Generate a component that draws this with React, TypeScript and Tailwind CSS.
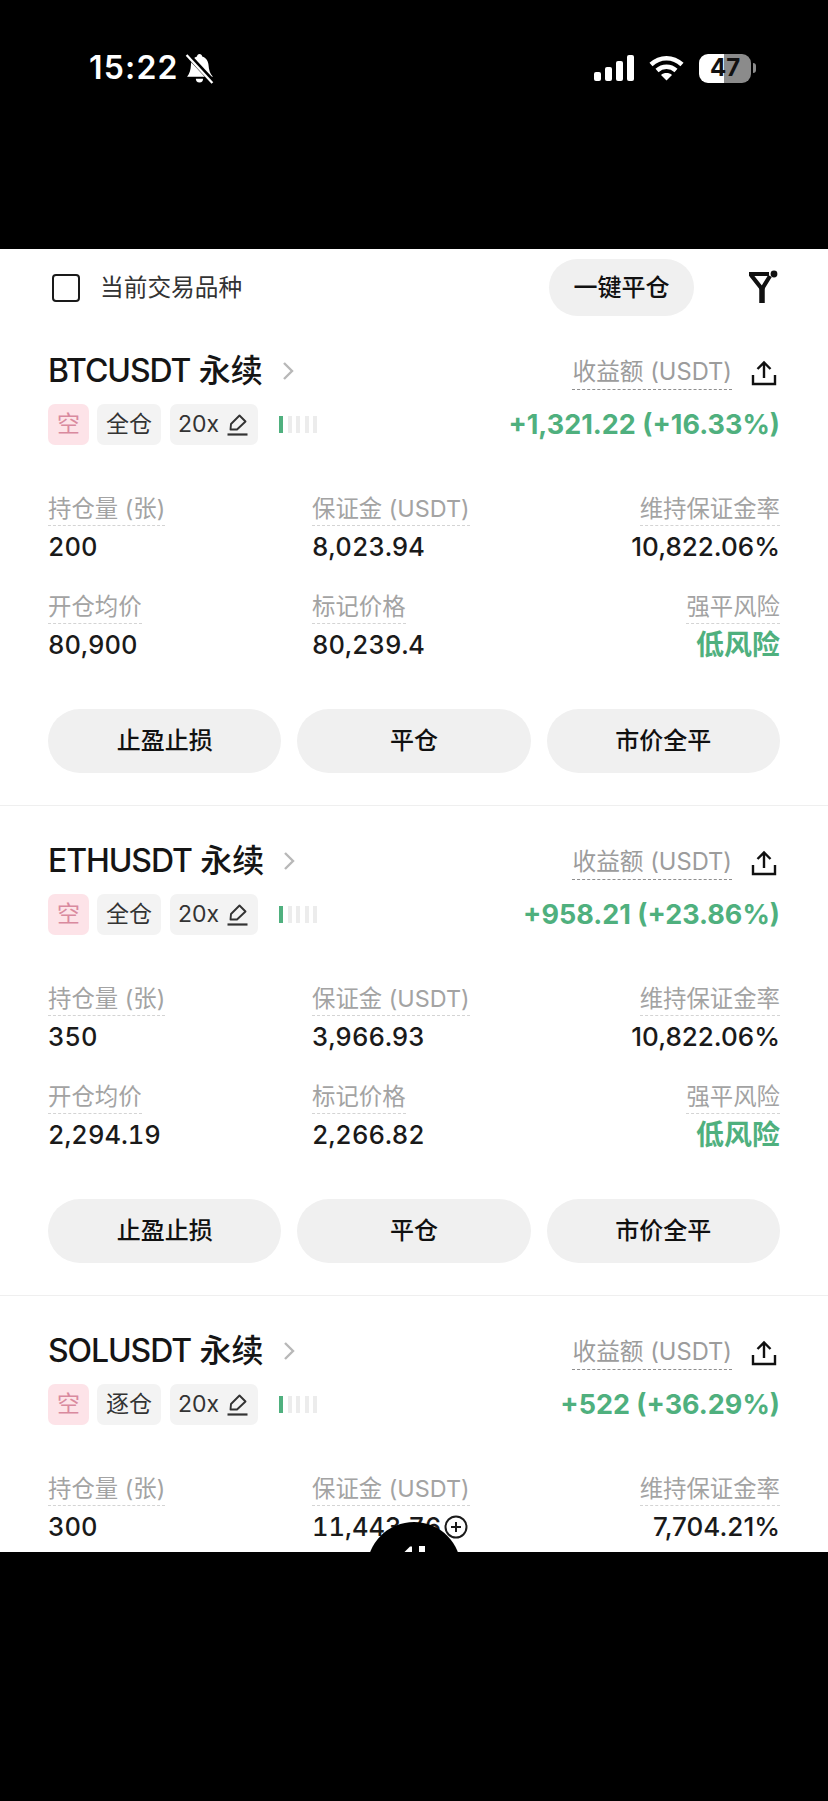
import React from "react";

const FONT = 'Inter, "Noto Sans CJK SC", sans-serif';

type Position = {
  symbol: string;
  margin: string;
  pnl: string;
  size: string;
  marginValue: string;
  marginRate: string;
  entry: string;
  mark: string;
  addMargin?: boolean;
};

const positions: Position[] = [
  { symbol: "BTCUSDT", margin: "全仓", pnl: "+1,321.22 (+16.33%)", size: "200", marginValue: "8,023.94", marginRate: "10,822.06%", entry: "80,900", mark: "80,239.4" },
  { symbol: "ETHUSDT", margin: "全仓", pnl: "+958.21 (+23.86%)", size: "350", marginValue: "3,966.93", marginRate: "10,822.06%", entry: "2,294.19", mark: "2,266.82" },
  { symbol: "SOLUSDT", margin: "逐仓", pnl: "+522 (+36.29%)", size: "300", marginValue: "11,443.76", marginRate: "7,704.21%", entry: "146.2", mark: "141.3", addMargin: true },
];

function StatusBar() {
  return (
    <div className="h-[249px] shrink-0 bg-black pt-[52px] pl-[89px] pr-[72px]">
      <div className="flex h-[32px] items-center text-white">
        <span className="text-[32px] font-semibold leading-none tracking-[1.2px]">15:22</span>
        <svg className="ml-[6px]" width="30" height="31" viewBox="0 0 29 30" fill="white">
          <path d="M14 1c1.500 0 2.500 1 2.600 2.400C20.500 4.500 22.500 8 22.800 12c.3 4 1.200 7.500 4.200 11H2c2.500-3.500 3.500-7 3.700-11C6 8 8 4.500 11.600 3.400 11.700 2 12.600 1 14 1z" />
          <path d="M10.500 25h7a3.500 3.500 0 0 1-7 0z" />
          <path d="M2 1l26 28" stroke="black" strokeWidth="5" />
          <path d="M1.500 2l25 27" stroke="white" strokeWidth="2.200" />
        </svg>
        <div className="ml-auto flex items-center">
          <svg width="40" height="26" viewBox="0 0 40 26" fill="white">
            <rect x="0" y="17" width="7" height="9" rx="2" />
            <rect x="11" y="12" width="7" height="14" rx="2" />
            <rect x="22" y="6" width="7" height="20" rx="2" />
            <rect x="33" y="0" width="7" height="26" rx="2" />
          </svg>
          <svg className="ml-[15px]" width="35" height="26" viewBox="0 0 35 26" fill="none" stroke="white" strokeWidth="4.500">
            <path d="M2 9.500C11 1 24 1 33 9.500" />
            <path d="M8 15.500c5.500-5 13.500-5 19 0" />
            <path d="M17.500 25.500l-5.500-5.500c3-2.600 8-2.600 11 0z" fill="white" stroke="none" />
          </svg>
          <div className="ml-[15px] flex h-[29px] w-[52px] items-center justify-center rounded-[9px] bg-[linear-gradient(90deg,#ffffff_48%,#8b8b8b_48%)] text-[24px] font-bold leading-none text-[#111111]">
            47
          </div>
          <div className="ml-[2px] h-[10px] w-[3px] rounded-r-full bg-[#8b8b8b]" />
        </div>
      </div>
    </div>
  );
}

function Toolbar() {
  return (
    <div className="flex h-[67px] shrink-0 items-end pl-[52px] pr-[50px]">
      <div className="flex h-[57px] items-center">
        <div className="h-[28px] w-[28px] rounded-[4px] border-2 border-[#1a1a1a]" />
        <span className="ml-[20px] text-[23.700px] leading-none text-[#333333]">当前交易品种</span>
      </div>
      <button className="ml-auto flex h-[57px] w-[145px] items-center justify-center rounded-full bg-[#f0f0f0] text-[24px] font-medium text-[#111111]">
        一键平仓
      </button>
      <svg className="mb-[12px] ml-[54px]" width="30" height="34" viewBox="0 0 30 34" fill="none" stroke="#111111">
        <path d="M1 4h20M3 5l11 14M22 6l-8 13" strokeWidth="4.200" />
        <path d="M14 18v15" strokeWidth="5.500" />
        <circle cx="26" cy="4" r="3.400" fill="#111111" stroke="none" />
      </svg>
    </div>
  );
}

function Pencil() {
  return (
    <svg className="ml-[8px]" width="21" height="22" viewBox="0 0 21 22" fill="none" stroke="#333333" strokeWidth="1.900">
      <path d="M3.500 15.500l0.500-5.500L12.500 1.500 18.500 7.500 10 15.500z" strokeLinejoin="round" />
      <path d="M0.500 20.500h20" strokeWidth="2.200" />
    </svg>
  );
}

function RiskTicks() {
  return (
    <div className="ml-[21px] flex gap-[4.500px]">
      <div className="h-[17px] w-[4px] bg-[#4fb07e]" />
      {[0, 1, 2, 3].map((i) => (
        <div key={i} className="h-[17px] w-[4px] bg-[#ececec]" />
      ))}
    </div>
  );
}

function Metric({ label, value, align, tone, extra }: { label: string; value: string; align?: "right"; tone?: "green"; extra?: boolean }) {
  const valueClass =
    tone === "green"
      ? "text-[28px] font-semibold leading-[32px] text-[#4fb07e]"
      : align === "right"
        ? "text-[26px] font-medium leading-[32px] text-[#1a1a1a]"
        : "text-[25.500px] font-medium leading-[32px] tabular-nums text-[#1a1a1a]";
  return (
    <div className={align === "right" ? "flex flex-col items-end" : "flex flex-col items-start"}>
      <span className="h-[32px] border-b border-dashed border-[#d4d4d4] text-[23.400px] leading-[30px] text-[#a3a3a3]">
        {label}
      </span>
      <div className="flex h-[38px] items-end pb-[1px]">
        <span className={valueClass}>{value}</span>
        {extra && (
          <svg className="mb-[4px] ml-[3px]" width="24" height="24" viewBox="0 0 24 24" fill="none" stroke="#1a1a1a" strokeWidth="2">
            <circle cx="12" cy="12" r="10.500" />
            <path d="M12 7v10M7 12h10" />
          </svg>
        )}
      </div>
    </div>
  );
}

function Card({ p }: { p: Position }) {
  return (
    <section className="h-[490px] shrink-0 border-b border-[#efefef] px-[48px] pt-[34px]">
      <div className="flex h-[42px] items-center justify-between">
        <div className="flex items-center">
          <h2 className="text-[32px] font-medium leading-none text-[#151515]">
            <span className="tracking-[-1.100px]">{p.symbol}</span> 永续
          </h2>
          <svg className="ml-[19px]" width="12" height="20" viewBox="0 0 12 20" fill="none" stroke="#b8b8b8" strokeWidth="2.400">
            <path d="M2 2l8 8-8 8" />
          </svg>
        </div>
        <div className="mt-[4px] flex items-center">
          <span className="h-[34px] border-b border-dashed border-[#8f8f8f] text-[23.700px] leading-[31px] text-[#9c9c9c]">收益额 (USDT)</span>
          <svg className="ml-[19px] mr-[3px]" width="26" height="26" viewBox="0 0 26 26" fill="none" stroke="#111111" strokeWidth="2.400">
            <path d="M13 18V3M6.500 9L13 2.500 19.500 9" />
            <path d="M2 15v9h22v-9" />
          </svg>
        </div>
      </div>
      <div className="mt-[12px] flex h-[41px] items-center">
        <span className="flex h-[41px] w-[41px] items-center justify-center rounded-[7px] bg-[#fde3e8] text-[23px] text-[#d98a9e]">空</span>
        <span className="ml-[8px] flex h-[41px] w-[64px] items-center justify-center rounded-[7px] bg-[#f3f3f3] text-[23px] text-[#333333]">{p.margin}</span>
        <span className="ml-[9px] flex h-[41px] w-[88px] items-center rounded-[7px] bg-[#f3f3f3] pl-[8px] text-[23px] text-[#333333]">
          20x
          <Pencil />
        </span>
        <RiskTicks />
        <span className="ml-auto text-[27px] font-bold leading-none text-[#4fb07e]">{p.pnl}</span>
      </div>
      <div className="mt-[49px] grid grid-cols-[264px_1fr_auto] gap-y-[28px]">
        <Metric label="持仓量 (张)" value={p.size} />
        <Metric label="保证金 (USDT)" value={p.marginValue} extra={p.addMargin} />
        <Metric label="维持保证金率" value={p.marginRate} align="right" />
        <Metric label="开仓均价" value={p.entry} />
        <Metric label="标记价格" value={p.mark} />
        <Metric label="强平风险" value="低风险" align="right" tone="green" />
      </div>
      <div className="mt-[47px] grid grid-cols-3 gap-[16px]">
        {["止盈止损", "平仓", "市价全平"].map((t) => (
          <button key={t} className="flex h-[64px] items-center justify-center rounded-full bg-[#f0f0f0] text-[24px] font-medium text-[#111111]">
            {t}
          </button>
        ))}
      </div>
    </section>
  );
}

export default function App() {
  return (
    <div className="relative flex h-[1801px] w-[828px] flex-col overflow-hidden bg-black" style={{ fontFamily: FONT }}>
      <StatusBar />
      <main className="flex h-[1303px] shrink-0 flex-col overflow-hidden bg-white">
        <Toolbar />
        {positions.map((p) => (
          <Card key={p.symbol} p={p} />
        ))}
      </main>
      <div className="h-[249px] shrink-0 bg-black" />
      {/* floating assistant button, mostly tucked under the bottom band */}
      <div className="absolute left-[367px] top-[1522px] flex h-[94px] w-[94px] justify-center rounded-full bg-black pt-[24px]">
        <svg width="26" height="7" viewBox="0 0 26 7" fill="white">
          <path d="M3 6.500L9 0.500h2v6z" />
          <rect x="18" y="0" width="6" height="7" />
        </svg>
      </div>
      <div className="absolute left-0 top-[1552px] h-[249px] w-[828px] bg-black" />
    </div>
  );
}
